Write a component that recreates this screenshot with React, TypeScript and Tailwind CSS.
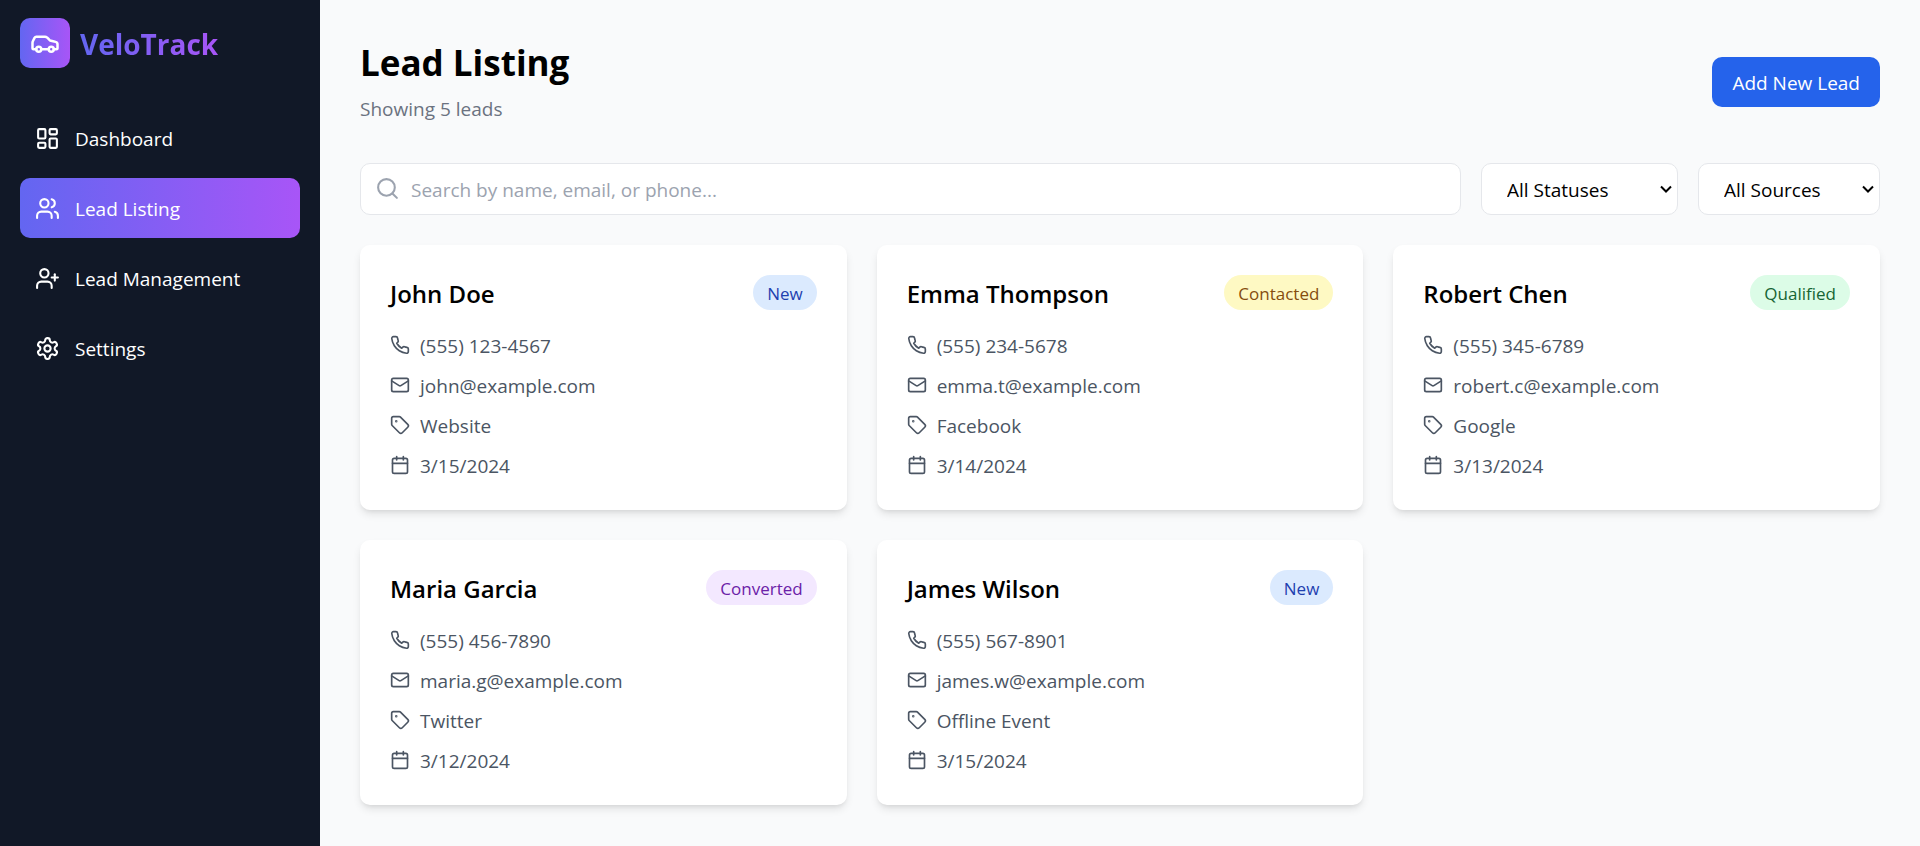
import React, { useState } from "react";

type IconProps = { className?: string; children: React.ReactNode };

function Icon({ className, children }: IconProps) {
  return (
    <svg
      viewBox="0 0 24 24"
      fill="none"
      stroke="currentColor"
      strokeWidth="2"
      strokeLinecap="round"
      strokeLinejoin="round"
      aria-hidden="true"
      className={className}
    >
      {children}
    </svg>
  );
}

const carPaths = (
  <>
    <path d="M19 17h2c.6 0 1-.4 1-1v-3c0-.9-.7-1.7-1.5-1.9C18.7 10.6 16 10 16 10s-1.3-1.4-2.2-2.3c-.5-.4-1.1-.7-1.8-.7H5c-.6 0-1.1.4-1.4.9l-1.4 2.9A3.7 3.7 0 0 0 2 12v4c0 .6.4 1 1 1h2" />
    <circle cx="7" cy="17" r="2" />
    <path d="M9 17h6" />
    <circle cx="17" cy="17" r="2" />
  </>
);

const dashboardPaths = (
  <>
    <rect width="7" height="9" x="3" y="3" rx="1" />
    <rect width="7" height="5" x="14" y="3" rx="1" />
    <rect width="7" height="9" x="14" y="12" rx="1" />
    <rect width="7" height="5" x="3" y="16" rx="1" />
  </>
);

const usersPaths = (
  <>
    <path d="M16 21v-2a4 4 0 0 0-4-4H6a4 4 0 0 0-4 4v2" />
    <circle cx="9" cy="7" r="4" />
    <path d="M22 21v-2a4 4 0 0 0-3-3.87" />
    <path d="M16 3.13a4 4 0 0 1 0 7.75" />
  </>
);

const userPlusPaths = (
  <>
    <path d="M16 21v-2a4 4 0 0 0-4-4H6a4 4 0 0 0-4 4v2" />
    <circle cx="9" cy="7" r="4" />
    <path d="M19 8v6" />
    <path d="M22 11h-6" />
  </>
);

const settingsPaths = (
  <>
    <path d="M12.22 2h-.44a2 2 0 0 0-2 2v.18a2 2 0 0 1-1 1.73l-.43.25a2 2 0 0 1-2 0l-.15-.08a2 2 0 0 0-2.73.73l-.22.38a2 2 0 0 0 .73 2.73l.15.1a2 2 0 0 1 1 1.72v.51a2 2 0 0 1-1 1.74l-.15.09a2 2 0 0 0-.73 2.73l.22.38a2 2 0 0 0 2.73.73l.15-.08a2 2 0 0 1 2 0l.43.25a2 2 0 0 1 1 1.73V20a2 2 0 0 0 2 2h.44a2 2 0 0 0 2-2v-.18a2 2 0 0 1 1-1.73l.43-.25a2 2 0 0 1 2 0l.15.08a2 2 0 0 0 2.73-.73l.22-.39a2 2 0 0 0-.73-2.73l-.15-.08a2 2 0 0 1-1-1.74v-.5a2 2 0 0 1 1-1.74l.15-.09a2 2 0 0 0 .73-2.73l-.22-.38a2 2 0 0 0-2.73-.73l-.15.08a2 2 0 0 1-2 0l-.43-.25a2 2 0 0 1-1-1.73V4a2 2 0 0 0-2-2z" />
    <circle cx="12" cy="12" r="3" />
  </>
);

const searchPaths = (
  <>
    <circle cx="11" cy="11" r="8" />
    <path d="m21 21-4.3-4.3" />
  </>
);

const phonePaths = (
  <path d="M22 16.92v3a2 2 0 0 1-2.18 2 19.79 19.79 0 0 1-8.63-3.07 19.5 19.5 0 0 1-6-6 19.79 19.79 0 0 1-3.07-8.67A2 2 0 0 1 4.11 2h3a2 2 0 0 1 2 1.72 12.84 12.84 0 0 0 .7 2.81 2 2 0 0 1-.45 2.11L8.09 9.91a16 16 0 0 0 6 6l1.27-1.27a2 2 0 0 1 2.11-.45 12.84 12.84 0 0 0 2.81.7A2 2 0 0 1 22 16.92z" />
);

const mailPaths = (
  <>
    <rect width="20" height="16" x="2" y="4" rx="2" />
    <path d="m22 7-8.97 5.7a1.94 1.94 0 0 1-2.06 0L2 7" />
  </>
);

const tagPaths = (
  <>
    <path d="M12.586 2.586A2 2 0 0 0 11.172 2H4a2 2 0 0 0-2 2v7.172a2 2 0 0 0 .586 1.414l8.704 8.704a2.426 2.426 0 0 0 3.42 0l6.58-6.58a2.426 2.426 0 0 0 0-3.42z" />
    <circle cx="7.5" cy="7.5" r=".5" fill="currentColor" />
  </>
);

const calendarPaths = (
  <>
    <path d="M8 2v4" />
    <path d="M16 2v4" />
    <rect width="18" height="18" x="3" y="4" rx="2" />
    <path d="M3 10h18" />
  </>
);

const navItems = [
  { label: "Dashboard", icon: dashboardPaths },
  { label: "Lead Listing", icon: usersPaths },
  { label: "Lead Management", icon: userPlusPaths },
  { label: "Settings", icon: settingsPaths },
];

type Status = "New" | "Contacted" | "Qualified" | "Converted";

type Lead = {
  name: string;
  status: Status;
  phone: string;
  email: string;
  source: string;
  date: string;
};

const leads: Lead[] = [
  { name: "John Doe", status: "New", phone: "(555) 123-4567", email: "john@example.com", source: "Website", date: "3/15/2024" },
  { name: "Emma Thompson", status: "Contacted", phone: "(555) 234-5678", email: "emma.t@example.com", source: "Facebook", date: "3/14/2024" },
  { name: "Robert Chen", status: "Qualified", phone: "(555) 345-6789", email: "robert.c@example.com", source: "Google", date: "3/13/2024" },
  { name: "Maria Garcia", status: "Converted", phone: "(555) 456-7890", email: "maria.g@example.com", source: "Twitter", date: "3/12/2024" },
  { name: "James Wilson", status: "New", phone: "(555) 567-8901", email: "james.w@example.com", source: "Offline Event", date: "3/15/2024" },
];

const statusStyles: Record<Status, string> = {
  New: "bg-[#dbeafe] text-[#1e40af]",
  Contacted: "bg-[#fef9c3] text-[#854d0e]",
  Qualified: "bg-[#dcfce7] text-[#166534]",
  Converted: "bg-[#f3e8ff] text-[#6b21a8]",
};

function Sidebar() {
  return (
    <aside className="w-80 shrink-0 bg-[#111827] px-5 text-white">
      <div className="flex h-[86px] items-center gap-[10px]">
        <div className="flex size-[50px] items-center justify-center rounded-[10px] bg-linear-to-r/srgb from-[#6366f1] to-[#a855f7]">
          <Icon className="size-[30px]">{carPaths}</Icon>
        </div>
        <span className="bg-linear-to-r/srgb from-[#6366f1] to-[#a855f7] bg-clip-text pt-0.5 text-[28px] leading-10 font-bold text-transparent">
          VeloTrack
        </span>
      </div>
      <nav className="mt-[22px] flex flex-col gap-[10px]">
        {navItems.map((item) => (
          <a
            key={item.label}
            href="#"
            aria-current={item.label === "Lead Listing" ? "page" : undefined}
            className={
              "flex h-[60px] items-center gap-[15px] rounded-[10px] px-[15px] " +
              (item.label === "Lead Listing" ? "bg-linear-to-r/srgb from-[#6366f1] to-[#a855f7]" : "")
            }
          >
            <Icon className="size-[25px] shrink-0">{item.icon}</Icon>
            <span className="pt-0.5">{item.label}</span>
          </a>
        ))}
      </nav>
    </aside>
  );
}

type FilterProps = {
  label: string;
  options: string[];
  value: string;
  onChange: (value: string) => void;
  className: string;
};

function Filter({ label, options, value, onChange, className }: FilterProps) {
  return (
    <div className={"relative shrink-0 " + className}>
      <select
        aria-label={label}
        value={value}
        onChange={(e) => onChange(e.target.value)}
        className="h-[52px] w-full appearance-none rounded-[10px] border border-[#e5e7eb] bg-white pt-0.5 pr-8 pl-[25px] text-black"
      >
        {options.map((o) => (
          <option key={o}>{o}</option>
        ))}
      </select>
      <svg
        viewBox="0 0 12 8"
        fill="none"
        stroke="black"
        strokeWidth="2"
        aria-hidden="true"
        className="pointer-events-none absolute top-[22px] right-[6px] h-2 w-3"
      >
        <path d="M1 1.5 6 6.5 11 1.5" />
      </svg>
    </div>
  );
}

function Detail({ icon, children }: { icon: React.ReactNode; children: React.ReactNode }) {
  return (
    <li className="flex items-center gap-[10px]">
      <Icon className="size-5 shrink-0">{icon}</Icon>
      <span className="pt-0.5">{children}</span>
    </li>
  );
}

function LeadCard({ lead }: { lead: Lead }) {
  return (
    <article className="rounded-[10px] bg-white p-[30px] shadow-[0_5px_8px_-1px_rgb(0_0_0/0.1),0_3px_5px_-3px_rgb(0_0_0/0.1)]">
      <div className="mb-5 flex items-center justify-between">
        <h2 className="pt-0.5 text-2xl leading-8 font-semibold">{lead.name}</h2>
        <span className={"rounded-full px-[14px] pt-[6px] pb-1 text-[17px] leading-[25px] " + statusStyles[lead.status]}>
          {lead.status}
        </span>
      </div>
      <ul className="flex flex-col gap-[10px] text-[#4b5563]">
        <Detail icon={phonePaths}>{lead.phone}</Detail>
        <Detail icon={mailPaths}>{lead.email}</Detail>
        <Detail icon={tagPaths}>{lead.source}</Detail>
        <Detail icon={calendarPaths}>{lead.date}</Detail>
      </ul>
    </article>
  );
}

export default function App() {
  const [query, setQuery] = useState("");
  const [status, setStatus] = useState("All Statuses");
  const [source, setSource] = useState("All Sources");

  const q = query.toLowerCase();
  const visible = leads.filter(
    (l) =>
      (status === "All Statuses" || l.status === status) &&
      (source === "All Sources" || l.source === source) &&
      (l.name + " " + l.email + " " + l.phone).toLowerCase().includes(q),
  );

  return (
    <div className="flex min-h-screen bg-[#f9fafb] font-['Open_Sans','Noto_Sans',sans-serif] text-[19px] leading-7 text-black">
      <Sidebar />
      <main className="min-w-0 flex-1 p-10">
        <header className="mb-10 flex items-center justify-between">
          <div>
            <h1 className="text-[35px] leading-[45px] font-bold">Lead Listing</h1>
            <p className="mt-[10px] text-[#6b7280]">Showing {visible.length} leads</p>
          </div>
          <button type="button" className="h-[50px] rounded-[10px] bg-[#2563eb] px-5 pt-0.5 text-white">
            Add New Lead
          </button>
        </header>

        <div className="mb-[30px] flex gap-5">
          <div className="relative min-w-0 flex-1">
            <Icon className="pointer-events-none absolute top-[13px] left-[15px] size-[25px] text-[#9ca3af]">
              {searchPaths}
            </Icon>
            <input
              type="text"
              aria-label="Search leads"
              value={query}
              onChange={(e) => setQuery(e.target.value)}
              placeholder="Search by name, email, or phone..."
              className="h-[52px] w-full rounded-[10px] border border-[#e5e7eb] bg-white pt-0.5 pr-5 pl-[50px] placeholder:text-[#9ca3af]"
            />
          </div>
          <Filter
            label="Status"
            options={["All Statuses", "New", "Contacted", "Qualified", "Converted"]}
            value={status}
            onChange={setStatus}
            className="w-[197px]"
          />
          <Filter
            label="Source"
            options={["All Sources", "Website", "Facebook", "Google", "Twitter", "Offline Event"]}
            value={source}
            onChange={setSource}
            className="w-[182px]"
          />
        </div>

        <section aria-label="Leads" className="grid grid-cols-3 gap-[30px]">
          {visible.map((lead) => (
            <LeadCard key={lead.name} lead={lead} />
          ))}
        </section>
      </main>
    </div>
  );
}
